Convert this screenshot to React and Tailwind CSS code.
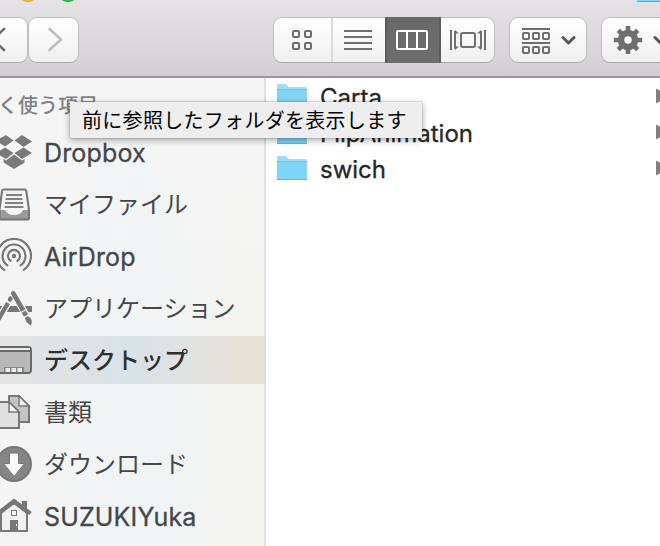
import React from "react";

const BUTTON =
  "flex h-[46px] shrink-0 items-center rounded-[9px] border border-[#bebdbf] border-b-[#a9a8aa] bg-linear-to-b from-white to-[#f0f0f0]";

function Toolbar() {
  return (
    <header className="relative flex h-[78px] w-[700px] border-b-2 border-[#99979a] bg-linear-to-b from-[#e5e3e6] to-[#d1cfd2] pt-[17px]">
      <i className="absolute left-[16px] top-[-22px] size-6 rounded-full border border-[#dea034] bg-[#ffbd2e]" />
      <i className="absolute left-[56px] top-[-22px] size-6 rounded-full border border-[#25a633] bg-[#28c940]" />
      <div className="absolute left-[637px] top-[-5px] h-[7px] w-8 border-b border-[#5badd0] bg-[#7fd4f7]" />
      <div className={`${BUTTON} -ml-[23px] w-[51px]`}>
        <svg width="49" height="44" fill="none" stroke="#6e6e6e" strokeWidth="2.6" strokeLinecap="round">
          <path d="M26 11 15 21.500 26 32" />
        </svg>
      </div>
      <div className={`${BUTTON} w-[51px]`}>
        <svg width="49" height="44" fill="none" stroke="#bdbdbd" strokeWidth="2.6" strokeLinecap="round" strokeLinejoin="round">
          <path d="M20.500 11 32 21.500 20.500 32" />
        </svg>
      </div>
      <div className={`${BUTTON} ml-[194px] w-[222px]`}>
        <svg width="57" height="44" fill="none" stroke="#6e6e6e" strokeWidth="2">
          <rect x="19" y="13" width="6" height="6" rx="1" />
          <rect x="31" y="13" width="6" height="6" rx="1" />
          <rect x="19" y="25" width="6" height="6" rx="1" />
          <rect x="31" y="25" width="6" height="6" rx="1" />
        </svg>
        <svg className="border-l-2 border-[#dadada]" width="54" height="44" stroke="#6e6e6e" strokeWidth="2">
          <path d="M11 13H39M11 19H39M11 25H39M11 31H39" />
        </svg>
        <div className="flex h-[46px] w-[56px] shrink-0 items-center border-x-2 border-[#5c5c5c] bg-linear-to-b from-[#696969] to-[#6d6d6d]">
          <svg width="52" height="46" fill="none" stroke="white" strokeWidth="2">
            <rect x="10" y="14" width="30" height="18" rx="1" />
            <path d="M20 14V32M30 14V32" />
          </svg>
        </div>
        <svg width="53" height="44" fill="none" stroke="#6e6e6e" strokeWidth="2">
          <path d="M10 12V32M44 12V32" />
          <rect x="20" y="15" width="14" height="14" rx="2" />
          <path d="M14 13V31M40 13V31" />
          <path d="M14 12 18 15.500H14ZM14 32 18 28.500H14ZM40 12 36 15.500H40ZM40 32 36 28.500H40Z" fill="#6e6e6e" stroke="none" />
        </svg>
      </div>
      <div className={`${BUTTON} ml-[14px] w-[78px]`}>
        <svg width="76" height="44" fill="none" stroke="#6e6e6e" strokeWidth="2">
          <path d="M12 11H40M12 25H40" />
          <rect x="13" y="15" width="6" height="6" rx="1" />
          <rect x="23" y="15" width="6" height="6" rx="1" />
          <rect x="33" y="15" width="6" height="6" rx="1" />
          <rect x="13" y="29" width="6" height="6" rx="1" />
          <rect x="23" y="29" width="6" height="6" rx="1" />
          <rect x="33" y="29" width="6" height="6" rx="1" />
          <path d="M53 19.500 58.500 25 64 19.500" stroke="#555" strokeWidth="3" strokeLinecap="round" strokeLinejoin="round" />
        </svg>
      </div>
      <div className={`${BUTTON} ml-[14px] w-[78px]`}>
        <svg width="76" height="44" fill="none">
          <g transform="translate(26 22)" stroke="#6e6e6e">
            <circle r="7" strokeWidth="6.500" />
            <path
              d="M0-9V-14M0 9V14M-9 0H-14M9 0H14M6.500-6.500 9.700-9.700M-6.500-6.500-9.700-9.700M6.500 6.500 9.700 9.700M-6.500 6.500-9.700 9.700"
              strokeWidth="4.600"
            />
          </g>
          <path d="M53 19.500 58.500 25 64 19.500" stroke="#555" strokeWidth="3" strokeLinecap="round" strokeLinejoin="round" />
        </svg>
      </div>
    </header>
  );
}

const ICONS = {
  dropbox: (
    <g fill="#7a7a7a">
      <path d="M6 5 13.500 10.500 5 16.500-4 10.500ZM22 5 32 11.500 23.500 17 14.500 10.500Z" />
      <path d="M5 17.500 13.500 23 6 29-4 23ZM23.500 17.500 32 23 22 29 14.500 23Z" />
      <path d="M14 24.500 22 30.500 24.500 29V32.500L14 39 3.500 32.500V29L6 30.500Z" />
    </g>
  ),
  files: (
    <g>
      <path d="M3.500 7.500H24.500Q26 7.500 26.300 9L29 28V36Q29 37.500 27.500 37.500H1Q-.5 37.500-.5 36V28L2 9Q2.200 7.500 3.500 7.500Z" fill="#f4f4f4" />
      <path d="M0 28H5Q7 33 14 33T23 28H29V37H0Z" fill="#9a9a9a" />
      <path d="M6 13H22M5.500 17H22.500M5 21H23M4.500 25H23.500" stroke="#828282" strokeWidth="2" />
      <path
        d="M3.500 7.500H24.500Q26 7.500 26.300 9L29 28V36Q29 37.500 27.500 37.500H1Q-.5 37.500-.5 36V28L2 9Q2.200 7.500 3.500 7.500Z"
        fill="none"
        stroke="#747474"
        strokeWidth="2"
      />
    </g>
  ),
  airdrop: (
    <g fill="none" stroke="#777" strokeWidth="2.200" strokeLinecap="round">
      <circle cx="14" cy="22" r="2.200" fill="#777" stroke="none" />
      <path d="M10.600 26.900A6 6 0 1 1 17.400 26.900M7.400 31.400A11.500 11.500 0 1 1 20.600 31.400M4.250 35.900A17 17 0 1 1 23.750 35.900" />
    </g>
  ),
  apps: (
    <g stroke="#777">
      <path d="M-2 23H32" strokeWidth="6" />
      <path d="M-2 34 11 12M13.500 7.500 26 29" stroke="#f4f5f5" strokeWidth="7" />
      <path d="M-2 34 8 17" strokeWidth="4.400" />
      <path d="M10 13.500 10.500 12.600" strokeWidth="4.400" strokeLinecap="round" />
      <path d="M13.300 7.300 23.500 25" strokeWidth="4.600" strokeLinecap="round" />
      <path d="M22 22.800 26 29.500" strokeWidth="4.600" />
      <path d="M21 26.600 27 23.200" stroke="#f4f5f5" strokeWidth="1.200" />
      <path d="M25 32Q27 29.500 30 31.500Q33 35 31 39.500Q25.500 37 25 32Z" fill="#777" stroke="none" />
    </g>
  ),
  desktop: (
    <g>
      <rect x="-4" y="9" width="35" height="26" rx="3" fill="#b8b8b8" stroke="#686868" strokeWidth="2" />
      <path d="M-3 11H30" stroke="#ededed" strokeWidth="2" />
      <path d="M-3 13H30" stroke="#686868" strokeWidth="2" />
      <path d="M4 29H24V34H4Z" fill="#858585" />
      <path d="M5.500 30H10V34H5.500ZM11.500 30H16V34H11.500ZM17.500 30H22V34H17.500Z" fill="#ececec" />
    </g>
  ),
  documents: (
    <g stroke="#777" strokeWidth="2" strokeLinejoin="miter">
      <path d="M9 6H19L29 16V32H9Z" fill="#c4c4c4" />
      <path d="M19 6V16H29Z" fill="#f1f1f1" strokeWidth="1.500" />
      <path d="M-4 12H9L19 22V38H-4Z" fill="#e0e0e0" />
      <path d="M9 12V22H19Z" fill="#f7f7f7" strokeWidth="1.500" />
    </g>
  ),
  downloads: (
    <g>
      <circle cx="14" cy="22" r="17" fill="#858585" stroke="#777" strokeWidth="2" />
      <path d="M9.500 11H18.500V21.500H24.500L14 34.500 3.500 21.500H9.500Z" fill="#fafafa" stroke="#777" />
    </g>
  ),
  home: (
    <g>
      <path d="M14 9 27 19V37H1V19Z" fill="#f1f1f1" stroke="#777" strokeWidth="2" />
      <path d="M22 7H27V17L22 13Z" fill="#777" />
      <path d="M-3 20 14 7 30.500 19.500" fill="none" stroke="#777" strokeWidth="4" />
      <rect x="11.500" y="16.500" width="5" height="5" fill="#fff" stroke="#777" />
      <path d="M10 26H18V37H10Z" fill="#777" />
      <path d="M16.500 30V32" stroke="white" />
    </g>
  ),
};

const LATIN = "pt-1 text-[25px] tracking-[0.15px] [-webkit-text-stroke:0.3px_#444647]";
const KANA = "pt-0.5 text-[24px]";

const PLACES = [
  ["dropbox", "Dropbox", LATIN],
  ["files", "マイファイル", KANA],
  ["airdrop", "AirDrop", LATIN],
  ["apps", "アプリケーション", KANA],
  ["desktop", "デスクトップ", "pt-0.5 text-[24px] font-medium text-[#2c3030]"],
  ["documents", "書類", KANA],
  ["downloads", "ダウンロード", KANA],
  ["home", "SUZUKIYuka", LATIN],
];

function Sidebar() {
  return (
    <nav className="h-[468px] w-[266px] shrink-0 border-r-2 border-[#dedede] bg-[#f5f5f5] bg-[linear-gradient(180deg,#f5f5f5_8%,rgba(245,245,245,0)_60%),linear-gradient(90deg,#f4f4f4_15%,#eff4f6_52%,#f5f4f0_98%)] text-[#444647]">
      <h2 className="-ml-[22px] h-[50px] pt-[14px] text-[20px] leading-[28px] font-medium text-[#808182]">よく使う項目</h2>
      <ul className="flex flex-col gap-1">
        {PLACES.map(([icon, label, style]) => (
          <li
            key={icon}
            className={`flex h-12 items-center whitespace-nowrap ${
              icon === "desktop" ? "bg-linear-to-r from-[#e3e3e3] via-[#d9e2e8] to-[#e9e2d4]" : ""
            }`}
          >
            <svg className="mr-[12px] shrink-0" width="32" height="44">{ICONS[icon]}</svg>
            <span className={style}>{label}</span>
          </li>
        ))}
      </ul>
    </nav>
  );
}

function Folder() {
  return (
    <svg className="shrink-0" width="32" height="26">
      <path d="M1 2Q1 1 2 1H10L13 4H29Q31 4 31 6V24H1Z" fill="#9fdcf6" />
      <path d="M1 7H31V24Q31 25 30 25H2Q1 25 1 24Z" fill="#80d4f7" />
      <path d="M1 6.500H31" stroke="#6fc5ea" />
      <path d="M1 24.500H31" stroke="#62b3d6" />
    </svg>
  );
}

function FileList() {
  return (
    <main className="w-[394px] overflow-hidden bg-white">
      {["Carta", "FlipAnimation", "swich"].map((name) => (
        <div key={name} className="flex h-9 w-[410px] items-center pl-[10px] text-[24px] text-[#262626]">
          <Folder />
          <span className="ml-3 flex-1 pt-1 [-webkit-text-stroke:0.3px_#262626]">{name}</span>
          <svg className="mr-[8px]" width="12" height="16" fill="#808080">
            <path d="M0 2Q0 0 2 1.500L12 8 2 14.500Q0 16 0 14Z" />
          </svg>
        </div>
      ))}
    </main>
  );
}

export default function App() {
  return (
    <div className="relative h-[546px] w-[660px] overflow-hidden bg-white font-[Inter,'Noto_Sans_CJK_JP',sans-serif]">
      <Toolbar />
      <div className="flex">
        <Sidebar />
        <FileList />
      </div>
      <div
        role="tooltip"
        className="absolute left-[70px] top-[102px] flex h-9 w-[352px] items-center whitespace-nowrap bg-[#eeeeee] pt-0.5 pl-3 text-[20px] tracking-[0.3px] text-black shadow-[0_2px_7px_rgba(0,0,0,0.35),0_0_1px_rgba(0,0,0,0.5)]"
      >
        前に参照したフォルダを表示します
      </div>
    </div>
  );
}
